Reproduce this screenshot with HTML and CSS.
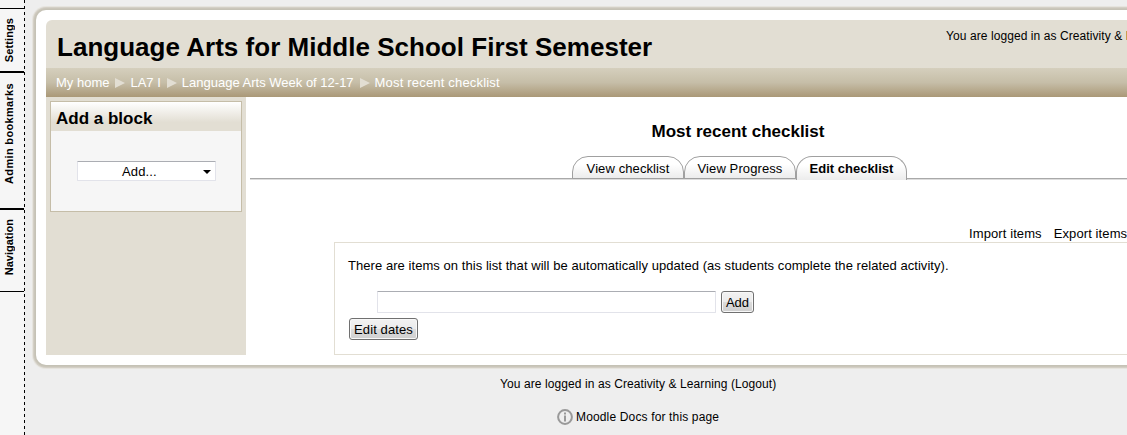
FILE: index.html
```html
<!DOCTYPE html>
<html lang="en">
<head>
<meta charset="utf-8">
<title>Most recent checklist</title>
<link rel="stylesheet" href="styles.css">
</head>
<body>
<div class="layout">
  <nav class="dock">
    <div class="dock-item settings"><span>Settings</span></div>
    <div class="dock-item bookmarks"><span>Admin bookmarks</span></div>
    <div class="dock-item navigation"><span>Navigation</span></div>
  </nav>
  <div class="page">
    <div class="panel">
      <header class="header">
        <h1>Language Arts for Middle School First Semester</h1>
        <div class="login">You are logged in as Creativity &amp; Learning (Logout)</div>
      </header>
      <div class="crumbs">
        <span>My home</span><i class="arrow"></i><span>LA7 I</span><i class="arrow"></i><span>Language Arts Week of 12-17</span><i class="arrow"></i><span class="current">Most recent checklist</span>
      </div>
      <div class="columns">
        <aside class="sidebar">
          <section class="block">
            <h2>Add a block</h2>
            <div class="select"><span>Add...</span><svg width="8" height="4" viewBox="0 0 8 4"><path d="M0 0h8L4 4z"/></svg></div>
          </section>
        </aside>
        <main class="main">
          <h2 class="title">Most recent checklist</h2>
          <div class="tabs">
            <a class="tab">View checklist</a><a class="tab">View Progress</a><a class="tab active">Edit checklist</a>
          </div>
          <div class="links"><a>Import items</a><a>Export items</a></div>
          <section class="box">
            <p>There are items on this list that will be automatically updated (as students complete the related activity).</p>
            <div class="add-row"><div class="field"></div><button class="btn add">Add</button></div>
            <button class="btn dates">Edit dates</button>
          </section>
        </main>
      </div>
    </div>
    <footer class="footer">
      <div class="footer-login">You are logged in as Creativity &amp; Learning (Logout)</div>
      <div class="docs"><svg width="16" height="16" viewBox="0 0 16 16"><circle cx="8" cy="8" r="6.9" fill="none" stroke="#999" stroke-width="2"/><path d="M7 3.5h2v2H7zM7 6.5h2v6H7z" fill="#999"/></svg><span>Moodle Docs for this page</span></div>
    </footer>
  </div>
</div>
</body>
</html>
```

FILE: styles.css
```css
* { box-sizing: border-box; }
html, body { height: 100%; overflow: hidden; }
body { margin: 0; background: #eee; color: #000; font: 13px/16px "Liberation Sans", Arial, sans-serif; white-space: nowrap; }
h1, h2, p { margin: 0; }

.layout { display: flex; height: 435px; overflow: hidden; }
.dock { flex: none; width: 25px; padding-top: 8px; background: linear-gradient(to right, #f6f6f6 24px, transparent 24px), repeating-linear-gradient(to bottom, #000 0 3px, #eee 3px 6px); }
.dock-item { width: 24px; display: flex; justify-content: center; align-items: flex-start; border-top: 2px solid #000; font-size: 11px; line-height: 12px; font-weight: bold; padding-right: 6px; }
.dock-item span { writing-mode: vertical-rl; transform: rotate(180deg); }
.settings { height: 63px; border-top-width: 1px; padding-top: 9px; letter-spacing: 0.1px; }
.bookmarks { height: 137px; padding-top: 10px; letter-spacing: 0.33px; }
.navigation { height: 84px; border-bottom: 1px solid #000; padding-top: 9px; }

.page { flex: none; width: 1206px; padding: 10px 0 0 11px; }
.panel { width: 1200px; height: 355px; padding: 10px; background: #fff; border-radius: 10px; box-shadow: 0 0 0 1px #c5c2b6, 0 0 0 2px #cac6ba, 0 0 0 3px #d3cfc6, 0 0 0 4px #e6e4de; }
.header { height: 48px; display: flex; align-items: flex-start; background: #e2ded3; border-radius: 6px 6px 0 0; padding-left: 11px; }
h1 { flex: none; width: 889px; font-size: 26px; line-height: 30px; padding-top: 12px; letter-spacing: 0.02px; }
.login { font-size: 12px; padding-top: 8px; letter-spacing: 0.08px; }
.crumbs { height: 29px; display: flex; align-items: center; gap: 6px; padding-left: 10px; color: #fff; background: linear-gradient(#d5cfbd, #c6bea8 50%, #aa9877); }
.arrow { border-left: 10px solid #e2ded3; border-top: 5px solid transparent; border-bottom: 5px solid transparent; margin-right: -1px; }
.current { letter-spacing: 0.18px; }

.columns { display: flex; height: 258px; }
.sidebar { width: 200px; flex: none; background: #e2ded3; padding: 4px; }
.block { height: 111px; border: 1px solid #c5bda8; background: #f6f6f6; }
.block h2 { height: 29px; padding-left: 5px; font-size: 17px; line-height: 33px; background: linear-gradient(#fff, #e2ded3 70%); }
.select { display: flex; align-items: center; width: 139px; height: 20px; margin: 30px 0 0 26px; padding: 1px 4px 0 44px; background: #fff; border: 1px solid #e2e3ea; border-top-color: #abadb3; border-radius: 1px; justify-content: space-between; letter-spacing: 0.15px; }

.main { width: 976px; flex: none; margin-left: 4px; }
.title { font-size: 17px; line-height: 20px; text-align: center; padding-top: 25px; height: 59px; }
.tabs { display: flex; justify-content: center; height: 24px; padding-left: 3px; background: linear-gradient(#a9a9a9, #a9a9a9) 0 22px / 100% 1px no-repeat, linear-gradient(#ddd, #ddd) 0 23px / 100% 1px no-repeat; }
.tab { width: 112px; height: 23px; border: 1px solid #a0a0a0; border-radius: 16px 16px 0 0; background: linear-gradient(#fff 35%, #ececec); text-align: center; line-height: 24px; letter-spacing: 0.1px; }
.tab.active { width: 111px; height: 24px; border-bottom: 0; font-weight: bold; letter-spacing: 0; }
.links { display: flex; gap: 12px; height: 62px; padding: 46px 0 0 719px; letter-spacing: 0.1px; }
.box { height: 113px; margin: 0 84px; border: 1px solid #e2ded3; padding: 15px 0 0 13px; }
.box p { line-height: 16px; letter-spacing: 0.055px; }
.add-row { display: flex; gap: 5px; margin: 17px 0 5px 29px; }
.field { width: 339px; height: 22px; border: 1px solid #e2e3ea; border-top-color: #abadb3; border-radius: 1px; }
.btn { display: block; height: 22px; padding: 0; border: 1px solid #707070; border-radius: 3px; background: linear-gradient(#f2f2f2, #ebebeb 48%, #dcdcdc 50%, #cfcfcf); box-shadow: inset 0 0 0 1px #f8f8f8; font: 13px/19px "Liberation Sans", Arial, sans-serif; color: #000; }
.add { width: 33px; }
.dates { width: 69px; margin-left: 1px; letter-spacing: 0.1px; }

.footer { font-size: 12px; padding-top: 11px; }
.footer-login { padding-left: 464px; letter-spacing: 0.09px; }
.docs { display: flex; align-items: center; gap: 3px; padding: 17px 0 0 521px; letter-spacing: 0.15px; }
```
